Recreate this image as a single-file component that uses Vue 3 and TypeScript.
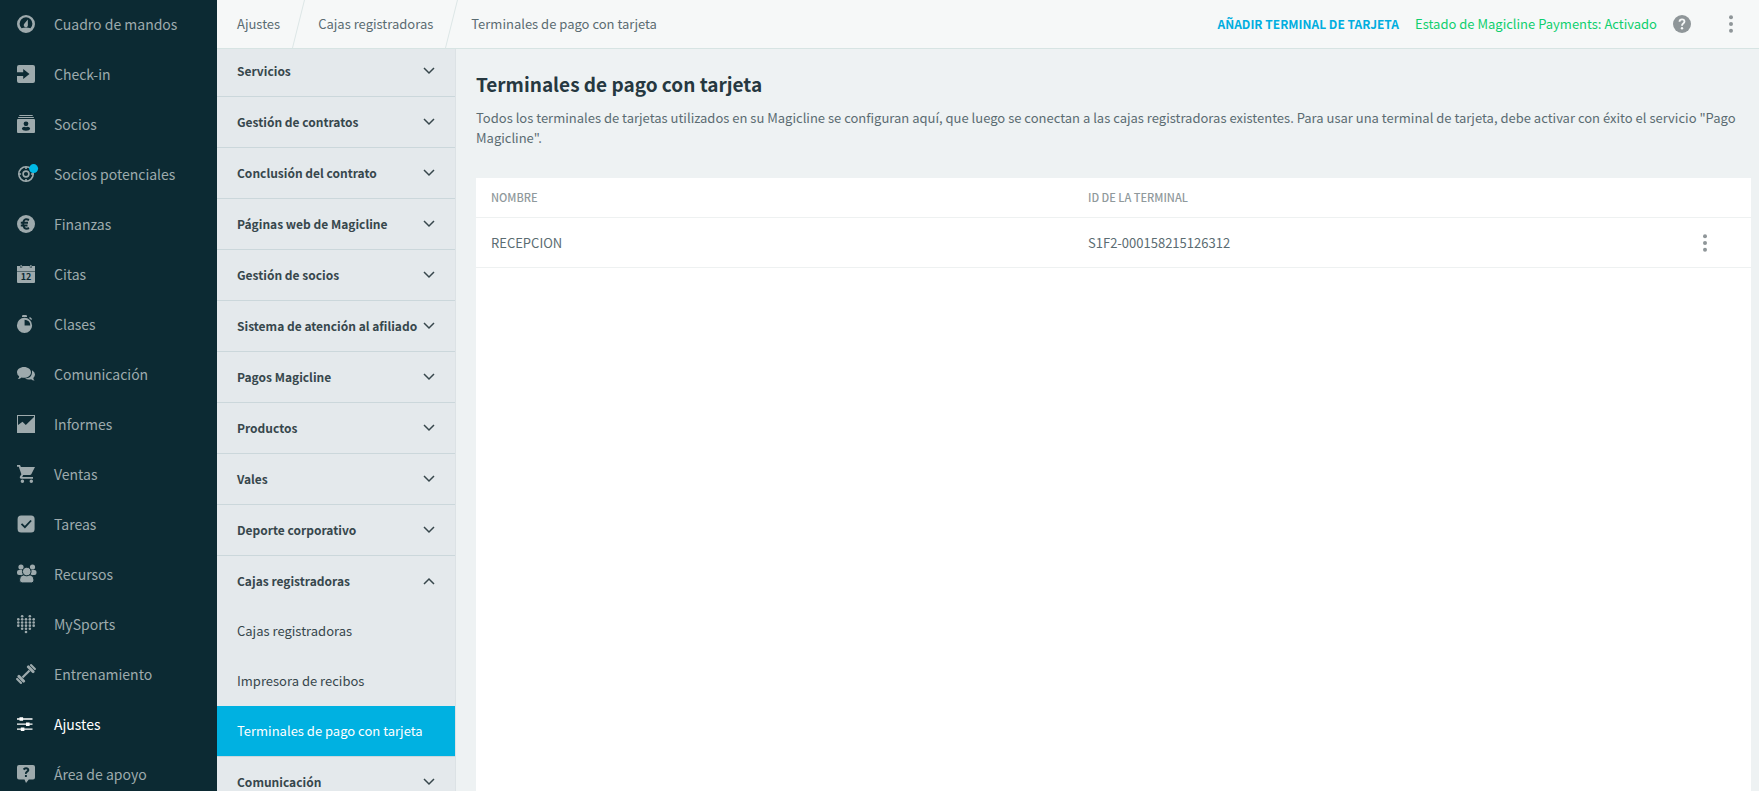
<script setup lang="ts">
interface NavItem {
  label: string
  icon: string
  active?: boolean
}

interface MenuGroup {
  label: string
  children?: string[]
}

interface Terminal {
  name: string
  id: string
}

const heartRows: number[][] = [
  [1, 3],
  [0, 1, 2, 3, 4],
  [0, 1, 2, 3, 4],
  [0, 1, 2, 3, 4],
  [1, 2, 3],
  [2],
]

const heartDots = heartRows.flatMap((cols, row) =>
  cols.map((col) => ({ x: 1.3 + col * 3.85, y: 1.2 + row * 3.15 })),
)

const navItems: NavItem[] = [
  { label: 'Cuadro de mandos', icon: 'dashboard' },
  { label: 'Check-in', icon: 'checkin' },
  { label: 'Socios', icon: 'members' },
  { label: 'Socios potenciales', icon: 'leads' },
  { label: 'Finanzas', icon: 'finance' },
  { label: 'Citas', icon: 'calendar' },
  { label: 'Clases', icon: 'classes' },
  { label: 'Comunicación', icon: 'chat' },
  { label: 'Informes', icon: 'reports' },
  { label: 'Ventas', icon: 'cart' },
  { label: 'Tareas', icon: 'tasks' },
  { label: 'Recursos', icon: 'resources' },
  { label: 'MySports', icon: 'mysports' },
  { label: 'Entrenamiento', icon: 'training' },
  { label: 'Ajustes', icon: 'settings', active: true },
  { label: 'Área de apoyo', icon: 'support' },
]

const crumbs: string[] = ['Ajustes', 'Cajas registradoras', 'Terminales de pago con tarjeta']

const groups: MenuGroup[] = [
  { label: 'Servicios' },
  { label: 'Gestión de contratos' },
  { label: 'Conclusión del contrato' },
  { label: 'Páginas web de Magicline' },
  { label: 'Gestión de socios' },
  { label: 'Sistema de atención al afiliado' },
  { label: 'Pagos Magicline' },
  { label: 'Productos' },
  { label: 'Vales' },
  { label: 'Deporte corporativo' },
  {
    label: 'Cajas registradoras',
    children: ['Cajas registradoras', 'Impresora de recibos', 'Terminales de pago con tarjeta'],
  },
  { label: 'Comunicación' },
]

const activeChild = 'Terminales de pago con tarjeta'

const terminals: Terminal[] = [{ name: 'RECEPCION', id: 'S1F2-000158215126312' }]
</script>

<template>
  <div class="app">
    <nav class="sidebar" aria-label="Principal">
      <a
        v-for="item in navItems"
        :key="item.label"
        href="#"
        class="nav-link"
        :class="{ active: item.active }"
      >
        <svg class="nav-icon" viewBox="0 0 18 18" aria-hidden="true">
          <g v-if="item.icon === 'dashboard'">
            <path fill-rule="evenodd" d="M9 0a9 9 0 1 1 0 18A9 9 0 0 1 9 0zM4.500 13.200A6.400 6.400 0 1 1 13.500 13.200Q9 11.800 4.500 13.200z" />
            <path d="M10.800 4.400L10.900 9.800A2.100 2.100 0 1 1 7.100 9z" />
          </g>
          <path
            v-else-if="item.icon === 'checkin'"
            fill-rule="evenodd"
            d="M2 0h14a2 2 0 0 1 2 2v14a2 2 0 0 1-2 2H2a2 2 0 0 1-2-2v-5h6.200v3L12.500 9 6.200 4v3.200H0V2a2 2 0 0 1 2-2z"
          />
          <path
            v-else-if="item.icon === 'members'"
            fill-rule="evenodd"
            d="M2.300 0h13.400v1H2.300zM1.200 2h15.600v1H1.200zM1 4h16a1 1 0 0 1 1 1v12a1 1 0 0 1-1 1H1a1 1 0 0 1-1-1V5a1 1 0 0 1 1-1zM9 6.400a2.400 2.400 0 1 0 0 4.800 2.400 2.400 0 0 0 0-4.800zM4.800 13.600Q5.500 15.800 9 15.800T13.200 13.600Q12.500 12 10.800 11.800Q9 12.600 7.200 11.800Q5.500 12 4.800 13.600z"
          />
          <g v-else-if="item.icon === 'leads'">
            <circle cx="9" cy="9" r="7.200" class="line" stroke-width="1.600" />
            <circle cx="9" cy="9" r="2.900" class="line" stroke-width="1.600" />
            <path class="line" stroke-width="1.600" d="M9 1.500v2.600M9 13.900v2.600M1.500 9h2.600M13.900 9h2.600" />
            <circle cx="16.600" cy="3.600" r="4.500" class="badge" />
          </g>
          <g v-else-if="item.icon === 'finance'">
            <circle cx="9" cy="9" r="9" />
            <path class="cut-line" stroke-width="2" d="M12 5Q7.400 2.600 6.300 7.200Q5.700 11 7.400 12.900Q9.400 14.400 12 13M3.800 7.700H11M3.800 10.500h6.700" />
          </g>
          <g v-else-if="item.icon === 'calendar'">
            <path d="M0 1h3v1.600h2.200V1h7.600v1.600H15V1h3v5H0zM3.500 0h1.200v2H3.500zM13.300 0h1.200v2h-1.200zM0 6.600h18V17a1 1 0 0 1-1 1H1a1 1 0 0 1-1-1z" />
            <text x="9" y="15" class="date-text">12</text>
          </g>
          <g v-else-if="item.icon === 'classes'">
            <path fill-rule="evenodd" d="M7.500 2.800a7.600 7.600 0 1 1 0 15.200 7.600 7.600 0 0 1 0-15.200zM7.600 4.700v5.700h5.700a5.700 5.700 0 0 0-5.700-5.700z" />
            <path d="M5 1.200Q5 0 6.200 0h2.600Q10 0 10 1.200V2H5z" />
            <path class="line" stroke-width="1.400" d="M12.500 2.600l2.200 2" />
          </g>
          <g v-else-if="item.icon === 'chat'">
            <path d="M7 2c3.900 0 7 2.400 7 5.400s-3.100 5.400-7 5.400q-1.300 0-2.500-.4Q3 13.900.8 14q1.300-1.300 1.400-2.700Q0 9.700 0 7.400C0 4.400 3.100 2 7 2z" />
            <path d="M15 5.200Q18 6.900 18 9.500q0 2-1.700 3.400.1 1.500 1.300 2.600-2 .1-3.500-1.300-3.400.8-6.100-.7Q14.700 13.200 15 7.700z" />
          </g>
          <path
            v-else-if="item.icon === 'reports'"
            fill-rule="evenodd"
            d="M0 0h18v18H0zM1 1v9l4.500-3.300L8.800 9.900 17 2V1z"
          />
          <path
            v-else-if="item.icon === 'cart'"
            d="M0 0h3l.9 2H18l-3.700 7.200Q13.800 10 12.900 10H6.200l-1 1.900H16v1.800H4.300Q2.200 13.500 3 11.600L4.400 9.200 1.800 1.800H0zM5.400 14.500a1.750 1.750 0 1 1 0 3.500 1.750 1.750 0 0 1 0-3.500zM14.300 14.500a1.750 1.750 0 1 1 0 3.500 1.750 1.750 0 0 1 0-3.500z"
          />
          <g v-else-if="item.icon === 'tasks'">
            <rect x="0.600" y="0.600" width="17" height="17" rx="3.500" />
            <path class="cut-line" stroke-width="1.800" d="M4.500 8.800l3.400 3.300 6.200-6.600" />
          </g>
          <g v-else-if="item.icon === 'resources'">
            <circle cx="4" cy="2" r="2.600" />
            <circle cx="15.500" cy="2" r="2.600" />
            <rect x="0" y="5" width="6.500" height="5" rx="2" />
            <rect x="13" y="5" width="6.500" height="5" rx="2" />
            <path class="cut-edge" d="M6.200 10Q2.500 10.500 2.500 15q0 2.900 2.600 2.900h9.300q2.600 0 2.600-2.900 0-4.500-3.700-5z" />
            <circle class="cut-edge" cx="9.750" cy="6.500" r="4.300" />
          </g>
          <g v-else-if="item.icon === 'mysports'">
            <circle v-for="(dot, i) in heartDots" :key="i" :cx="dot.x" :cy="dot.y" r="1.300" />
          </g>
          <g v-else-if="item.icon === 'training'" transform="rotate(-45 9 9)">
            <rect x="4" y="7.900" width="10" height="2.200" />
            <rect x="0.800" y="4.200" width="3" height="9.600" rx="1.300" />
            <rect x="-1.900" y="5.200" width="2.200" height="7.600" rx="1" />
            <rect x="14.200" y="4.200" width="3" height="9.600" rx="1.300" />
            <rect x="17.700" y="5.200" width="2.200" height="7.600" rx="1" />
          </g>
          <g v-else-if="item.icon === 'settings'">
            <path class="line" stroke-width="1.300" d="M0 4h15.500M0 9.200h15.500M0 14.200h15.500" />
            <path d="M2.500 2.200h3.600v3.600H2.500zM9 7.400h3.600V11H9zM3.800 12.400h3.600V16H3.800z" />
          </g>
          <g v-else>
            <path d="M2 0h14q2 0 2 2v10.500q0 2-2 2h-4.200L9 18l-1.500-3.500H2q-2 0-2-2V2q0-2 2-2z" />
            <path class="cut-line" stroke-width="1.900" d="M6.500 4.500Q9 2.400 11 3.900q1 1.700-1.200 3Q8.800 7.600 8.900 8.800M8.900 10v2" />
          </g>
        </svg>
        <span>{{ item.label }}</span>
      </a>
    </nav>

    <div class="workspace">
      <header class="topbar">
        <nav class="crumbs" aria-label="Ruta">
          <template v-for="(crumb, i) in crumbs" :key="crumb">
            <svg v-if="i > 0" class="slash" viewBox="0 0 13 48" aria-hidden="true">
              <path d="M12.500 0L0.500 48" />
            </svg>
            <a href="#" class="crumb">{{ crumb }}</a>
          </template>
        </nav>
        <div class="actions">
          <button type="button" class="add">AÑADIR TERMINAL DE TARJETA</button>
          <a href="#" class="status">Estado de Magicline Payments: Activado</a>
          <button type="button" class="icon-button help" aria-label="Ayuda">
            <svg width="18" height="18" viewBox="0 0 18 18" aria-hidden="true">
              <circle cx="9" cy="9" r="9" fill="#8f9699" />
              <path d="M6.500 6.800Q6.600 4.400 9 4.400T11.500 6.600Q11.500 7.700 10.200 8.500Q9 9.300 9 10.700" fill="none" stroke="#f6f8f8" stroke-width="1.800" />
              <circle cx="9" cy="13.300" r="1.200" fill="#f6f8f8" />
            </svg>
          </button>
          <button type="button" class="icon-button more" aria-label="Más opciones">
            <svg width="4" height="18" viewBox="0 0 4 18" aria-hidden="true">
              <circle cx="2" cy="2.200" r="2" /><circle cx="2" cy="9" r="2" /><circle cx="2" cy="15.800" r="2" />
            </svg>
          </button>
        </div>
      </header>

      <div class="body">
        <nav class="submenu" aria-label="Ajustes">
          <ul class="groups">
            <li v-for="group in groups" :key="group.label" class="group">
              <button type="button" class="group-toggle" :aria-expanded="!!group.children">
                <span class="group-label">{{ group.label }}</span>
                <svg class="chevron" viewBox="0 0 12 8" aria-hidden="true">
                  <path :d="group.children ? 'M1 7l5-5 5 5' : 'M1 1l5 5 5-5'" />
                </svg>
              </button>
              <template v-if="group.children">
                <a
                  v-for="child in group.children"
                  :key="child"
                  href="#"
                  class="child"
                  :class="{ selected: child === activeChild }"
                >{{ child }}</a>
              </template>
            </li>
          </ul>
        </nav>

        <main class="content">
          <h1>Terminales de pago con tarjeta</h1>
          <p class="intro">
            Todos los terminales de tarjetas utilizados en su Magicline se configuran aquí, que luego se conectan a las cajas registradoras existentes. Para usar una terminal de tarjeta, debe activar con éxito el servicio "Pago Magicline".
          </p>
          <section class="panel">
            <table>
              <thead>
                <tr>
                  <th class="col-name" scope="col">NOMBRE</th>
                  <th scope="col">ID DE LA TERMINAL</th>
                  <td class="col-menu"></td>
                </tr>
              </thead>
              <tbody>
                <tr v-for="terminal in terminals" :key="terminal.id">
                  <td>{{ terminal.name }}</td>
                  <td>{{ terminal.id }}</td>
                  <td class="col-menu">
                    <button type="button" class="icon-button more" aria-label="Opciones del terminal">
                      <svg width="4" height="18" viewBox="0 0 4 18" aria-hidden="true">
                        <circle cx="2" cy="2.200" r="2" /><circle cx="2" cy="9" r="2" /><circle cx="2" cy="15.800" r="2" />
                      </svg>
                    </button>
                  </td>
                </tr>
              </tbody>
            </table>
          </section>
        </main>
      </div>
    </div>
  </div>
</template>

<style>
body {
  margin: 0;
  overflow: hidden;
}
</style>

<style scoped>
.app {
  display: flex;
  height: 100vh;
  overflow: hidden;
  background: #eef2f3;
  color: #5b6c72;
  font-family: "Noto Sans CJK JP", "Noto Sans CJK SC", "Noto Sans", sans-serif;
  font-size: 13px;
}

a {
  color: inherit;
  text-decoration: none;
}

button {
  border: 0;
  padding: 0;
  background: none;
  color: inherit;
  font: inherit;
  cursor: pointer;
}

.sidebar {
  flex: 0 0 217px;
  overflow: hidden;
  background: #0c2a33;
}

.nav-link {
  display: flex;
  align-items: center;
  gap: 19px;
  height: 48px;
  padding: 0 17px 2px;
  color: #9eaaad;
  font-size: 14px;
}

.nav-link.active {
  color: #fff;
}

.nav-icon {
  width: 18px;
  height: 18px;
  flex: none;
  overflow: visible;
  fill: currentColor;
}

.line {
  fill: none;
  stroke: currentColor;
}

.cut-line {
  fill: none;
  stroke: #0c2a33;
}

.cut-edge {
  stroke: #0c2a33;
  stroke-width: 1;
}

.badge {
  fill: #00b9e6;
}

.date-text {
  fill: #0c2a33;
  font-size: 9px;
  font-weight: 700;
  text-anchor: middle;
}

.workspace {
  display: flex;
  flex: 1;
  flex-direction: column;
  min-width: 0;
}

.topbar {
  display: flex;
  flex: none;
  align-items: center;
  justify-content: space-between;
  height: 48px;
  padding: 0 26px 0 20px;
  border-bottom: 1px solid #d7e4e3;
  background: #f6f8f8;
}

.crumbs,
.actions {
  display: flex;
  align-items: center;
  white-space: nowrap;
}

.crumb,
.add,
.status,
.group-label {
  padding-bottom: 2px;
}

.slash {
  width: 13px;
  height: 48px;
  margin: 0 13px 0 12px;
  fill: none;
  stroke: #dce6e6;
}

.actions {
  gap: 16px;
}

.add {
  color: #00aee0;
  font-size: 12px;
  font-weight: 700;
}

.status {
  color: #0fcf6d;
}

.icon-button {
  display: flex;
}

.more {
  fill: #8f9699;
}

.actions .more {
  margin-left: 22px;
}

.body {
  display: flex;
  flex: 1;
  min-height: 0;
}

.submenu {
  flex: 0 0 238px;
  overflow: hidden;
  border-right: 1px solid #dce2e5;
  background: #e4e9ec;
  color: #37474c;
}

.groups {
  margin: -3px 0 0;
  padding: 0;
  list-style: none;
}

.group {
  border-bottom: 1px solid #cbd7db;
}

.group-toggle {
  display: flex;
  align-items: center;
  justify-content: space-between;
  width: 100%;
  height: 50px;
  padding: 0 20px;
  font-size: 12px;
  font-weight: 700;
  white-space: nowrap;
}

.chevron {
  width: 12px;
  height: 8px;
  flex: none;
  fill: none;
  stroke: currentColor;
  stroke-width: 1.500;
}

.child {
  display: flex;
  box-sizing: border-box;
  align-items: center;
  height: 50px;
  padding: 0 20px 2px;
}

.child.selected {
  background: #00b1e1;
  color: #fff;
}

.content {
  display: flex;
  flex: 1;
  flex-direction: column;
  min-width: 0;
  padding: 20px 8px 0 20px;
}

h1 {
  margin: 0;
  color: #263840;
  font-size: 19px;
  font-weight: 700;
  line-height: 30px;
}

.intro {
  margin: 9px 0 30px;
  line-height: 20px;
}

.panel {
  flex: 1;
  background: #fff;
}

table {
  width: 100%;
  border-collapse: collapse;
  table-layout: fixed;
}

th,
td {
  height: 49px;
  padding: 0 15px;
  border-bottom: 1px solid #eef1f1;
  text-align: left;
}

thead th,
thead td {
  height: 37px;
  padding-bottom: 2px;
  color: #8f999c;
  font-size: 11px;
  font-weight: 500;
}

.col-name {
  width: 567px;
}

.col-menu {
  width: 33px;
}
</style>
